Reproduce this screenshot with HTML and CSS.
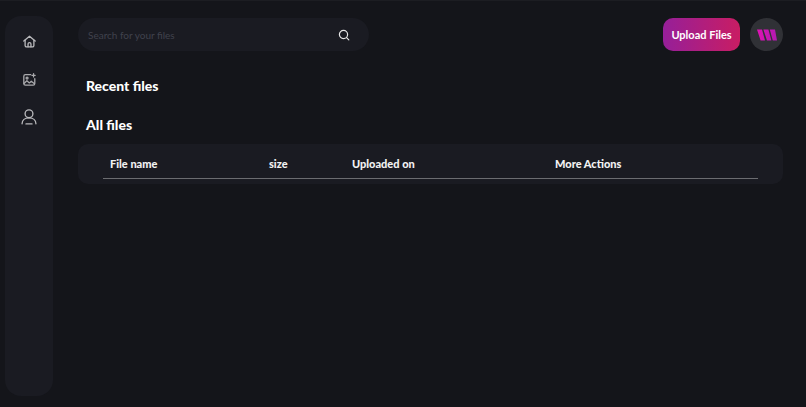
FILE: index.html
```html
<!DOCTYPE html>
<html lang="en">
<head>
<meta charset="utf-8">
<title>Files</title>
<link rel="stylesheet" href="styles.css">
</head>
<body>
<div class="app">
  <nav class="sidebar">
    <a class="nav-item"><svg width="13" height="13" viewBox="0 0 16 16" fill="none" stroke="#b9b9bc" stroke-width="1.6" stroke-linejoin="round" stroke-linecap="round"><path d="M1 7.4 8 1.4l7 6"/><path d="M2.6 6.2v6.6a1.8 1.8 0 0 0 1.8 1.8h7.2a1.8 1.8 0 0 0 1.8-1.8V6.2"/><path d="M6.2 14.6v-3.4a1.8 1.8 0 0 1 3.6 0v3.4"/></svg></a>
    <a class="nav-item"><svg width="13" height="13" viewBox="0 0 16 16" fill="none" stroke="#a9a9ac" stroke-width="1.6" stroke-linejoin="round" stroke-linecap="round"><path d="M9.5 2H3a2 2 0 0 0-2 2v9a2 2 0 0 0 2 2h9.5a2 2 0 0 0 2-2V7"/><path d="M13 .8v4M11 2.8h4"/><circle cx="5" cy="6.2" r="1.2"/><path d="M1.2 13l3.6-3.4 3 2.6 2.4-2 3.9 3"/></svg></a>
    <a class="nav-item"><svg width="16" height="16" viewBox="0 0 18 18" fill="none" stroke="#b9b9bc" stroke-width="1.5" stroke-linecap="round"><circle cx="9" cy="5.4" r="4.4"/><path d="M1.2 16.6c0-4 3.2-6.6 7.8-6.6s7.8 2.6 7.8 6.6"/><path d="M5.6 16.8h6.8"/></svg></a>
  </nav>
  <main class="main">
    <header class="topbar">
      <div class="search">
        <span class="search-text">Search for your files</span>
        <svg width="12" height="12" viewBox="0 0 12 12" fill="none" stroke="#e6e6e6" stroke-width="1.2" stroke-linecap="round"><circle cx="5.5" cy="5.5" r="4.1"/><path d="m8.6 8.6 2.2 2.2"/></svg>
      </div>
      <div class="actions">
        <button class="upload">Upload Files</button>
        <div class="avatar"><svg width="20" height="12" viewBox="0 0 20 12"><defs><linearGradient id="w" x1="0" y1="0" x2="1" y2="0"><stop offset="0" stop-color="#e012b4"/><stop offset="1" stop-color="#b01ab0"/></linearGradient></defs><path fill="url(#w)" d="M0 .6h5l3 10.8H3.6zM6.4.6h5l3 10.8H10zM12.8.6h5.2l2 10.8h-4.2z"/></svg></div>
      </div>
    </header>
    <section class="section-head recent"><h2>Recent files</h2></section>
    <section class="section-head all"><h2>All files</h2></section>
    <div class="table">
      <div class="table-head">
        <span class="col-name">File name</span>
        <span class="col-size">size</span>
        <span class="col-date">Uploaded on</span>
        <span class="col-more">More Actions</span>
      </div>
    </div>
  </main>
</div>
</body>
</html>
```
FILE: styles.css
```css
* { box-sizing: border-box; }
html, body { margin: 0; height: 100%; }
body {
  background: #14151a;
  color: #fff;
  font-family: Lato, "Noto Sans", sans-serif;
  overflow: hidden;
  border-top: 1px solid #1c1d22;
}
.app {
  display: flex;
  height: 406px;
  padding: 15px 23px 11px 5px;
}
.sidebar {
  width: 48px;
  flex: none;
  background: #1a1b22;
  border-radius: 16px;
  display: flex;
  flex-direction: column;
  align-items: center;
  padding-top: 16px;
  gap: 20px;
}
.nav-item {
  display: flex;
  width: 18px;
  height: 18px;
  align-items: center;
  justify-content: center;
}
.main {
  flex: 1;
  margin-left: 25px;
  padding-top: 2px;
  display: flex;
  flex-direction: column;
}
.topbar {
  display: flex;
  justify-content: space-between;
  height: 33px;
}
.search {
  width: 291px;
  background: #1a1b22;
  border-radius: 17px;
  display: flex;
  align-items: center;
  justify-content: space-between;
  padding: 0 19px 0 10px;
}
.search-text {
  font-size: 10px;
  color: #40424d;
}
.actions { display: flex; gap: 10px; }
.upload {
  width: 77px;
  height: 33px;
  border: 0;
  padding: 0;
  border-radius: 10px;
  background: linear-gradient(90deg, #961f99, #c91d63);
  color: #fff;
  font: 700 11px Lato, sans-serif;
}
.avatar {
  width: 33px;
  height: 33px;
  border-radius: 50%;
  background: #303136;
  display: flex;
  align-items: center;
  justify-content: center;
}
.section-head h2 {
  margin: 0;
  font-size: 14px;
  line-height: 18px;
  font-weight: 900;
}
.section-head { padding-left: 8px; }
.recent { margin-top: 26px; }
.all { margin-top: 21px; }
.table {
  margin-top: 10px;
  height: 40px;
  background: #1a1b22;
  border-radius: 10px;
  padding: 0 25px;
}
.table-head {
  height: 35px;
  border-bottom: 1.5px solid #6b6c70;
  display: grid;
  grid-template-columns: 159px 83px 203px 1fr;
  padding-left: 7px;
  padding-top: 12px;
  font-size: 11px;
  line-height: 16px;
  font-weight: 900;
  color: #f2f2f2;
}
```
